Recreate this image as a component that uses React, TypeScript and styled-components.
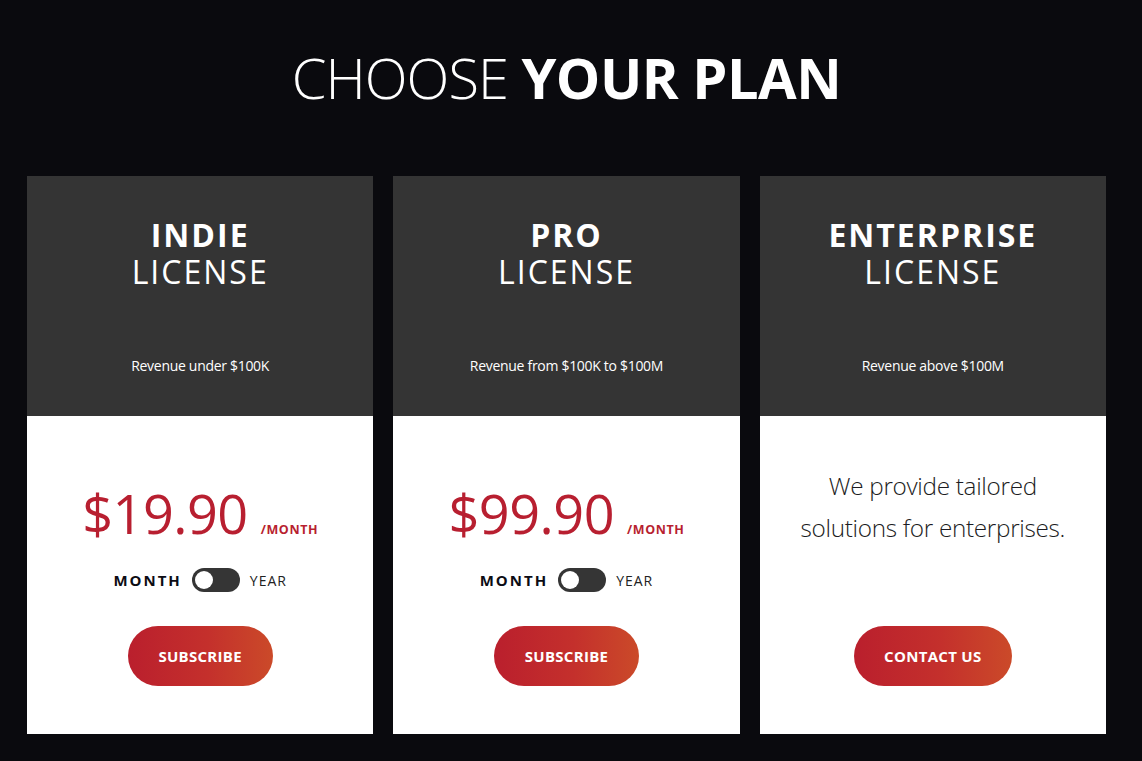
import React from "react";
import styled, { createGlobalStyle } from "styled-components";

const Global = createGlobalStyle`
  html, body { margin: 0; padding: 0; background: #0a0a0e; }
  body { font-family: "Open Sans", "Noto Sans", sans-serif; }
`;

const Page = styled.main`
  width: 1142px;
  min-height: 761px;
  box-sizing: border-box;
  padding: 44px 36px 0 27px;
  background: #0a0a0e;
`;

const Title = styled.h1`
  margin: 0 0 66px;
  text-align: center;
  color: #fff;
  font-size: 56px;
  line-height: 66px;
  font-weight: 300;
  letter-spacing: -1px;
  b { font-weight: 700; letter-spacing: -0.5px; }
`;

const Grid = styled.div`
  display: grid;
  grid-template-columns: repeat(3, 1fr);
  column-gap: 20px;
`;

const Card = styled.section`
  display: flex;
  flex-direction: column;
`;

const Head = styled.div`
  height: 240px;
  background: #343434;
  color: #fff;
  display: flex;
  flex-direction: column;
  align-items: center;
  padding-top: 40px;
  box-sizing: border-box;
`;

const Name = styled.h2`
  margin: 0;
  text-align: center;
  font-size: 32px;
  line-height: 37px;
  letter-spacing: 2px;
  font-weight: 400;
  b { font-weight: 700; display: block; }
`;

const Revenue = styled.p`
  margin: 66px 0 0;
  font-size: 14px;
  letter-spacing: -0.3px;
`;

const Body = styled.div<{ $top: number }>`
  height: 318px;
  background: #fff;
  display: flex;
  flex-direction: column;
  align-items: center;
  box-sizing: border-box;
  padding-top: ${(p) => p.$top}px;
`;

const PriceRow = styled.div`
  display: flex;
  align-items: baseline;
  color: #b81f30;
  gap: 13px;
`;

const Price = styled.span`
  font-size: 54px;
  line-height: 70px;
  font-weight: 400;
  letter-spacing: -0.5px;
`;

const Per = styled.span`
  font-size: 12.5px;
  font-weight: 700;
  letter-spacing: 0.6px;
`;

const ToggleRow = styled.div`
  display: flex;
  align-items: center;
  gap: 10px;
  margin-top: 20px;
  color: #111;
`;

const Period = styled.span<{ $active?: boolean }>`
  font-size: ${(p) => (p.$active ? 15 : 14)}px;
  font-weight: ${(p) => (p.$active ? 700 : 400)};
  letter-spacing: ${(p) => (p.$active ? 2 : 1)}px;
  color: ${(p) => (p.$active ? "#0c0c14" : "#222")};
`;

const Switch = styled.span`
  position: relative;
  width: 48px;
  height: 24px;
  border-radius: 12px;
  background: #353535;
  &::after {
    content: "";
    position: absolute;
    left: 3px;
    top: 3px;
    width: 18px;
    height: 18px;
    border-radius: 50%;
    background: #fff;
  }
`;

const Button = styled.button<{ $w: number; $mt: number }>`
  width: ${(p) => p.$w}px;
  height: 60px;
  margin-top: ${(p) => p.$mt}px;
  border: none;
  border-radius: 30px;
  background: linear-gradient(90deg, #ba1f2d 0%, #c4302c 55%, #cb4a29 100%);
  color: #fff;
  font-family: inherit;
  font-size: 15px;
  font-weight: 700;
  letter-spacing: 0.3px;
`;

const Tailored = styled.p`
  margin: 0;
  text-align: center;
  font-size: 24.3px;
  line-height: 42px;
  font-weight: 300;
  color: #1c1c22;
  letter-spacing: -0.3px;
`;

type Plan = {
  name: string;
  revenue: string;
  price?: string;
};

const plans: Plan[] = [
  { name: "INDIE", revenue: "Revenue under $100K", price: "$19.90" },
  { name: "PRO", revenue: "Revenue from $100K to $100M", price: "$99.90" },
  { name: "ENTERPRISE", revenue: "Revenue above $100M" },
];

export default function App() {
  return (
    <>
      <Global />
      <Page>
        <Title>
          CHOOSE <b>YOUR PLAN</b>
        </Title>
        <Grid>
          {plans.map((p) => (
            <Card key={p.name}>
              <Head>
                <Name>
                  <b>{p.name}</b>LICENSE
                </Name>
                <Revenue>{p.revenue}</Revenue>
              </Head>
              {p.price ? (
                <Body $top={62}>
                  <PriceRow>
                    <Price>{p.price}</Price>
                    <Per>/MONTH</Per>
                  </PriceRow>
                  <ToggleRow>
                    <Period $active>MONTH</Period>
                    <Switch />
                    <Period>YEAR</Period>
                  </ToggleRow>
                  <Button $w={145} $mt={34}>SUBSCRIBE</Button>
                </Body>
              ) : (
                <Body $top={49}>
                  <Tailored>
                    We provide tailored
                    <br />
                    solutions for enterprises.
                  </Tailored>
                  <Button $w={158} $mt={77}>CONTACT US</Button>
                </Body>
              )}
            </Card>
          ))}
        </Grid>
      </Page>
    </>
  );
}
